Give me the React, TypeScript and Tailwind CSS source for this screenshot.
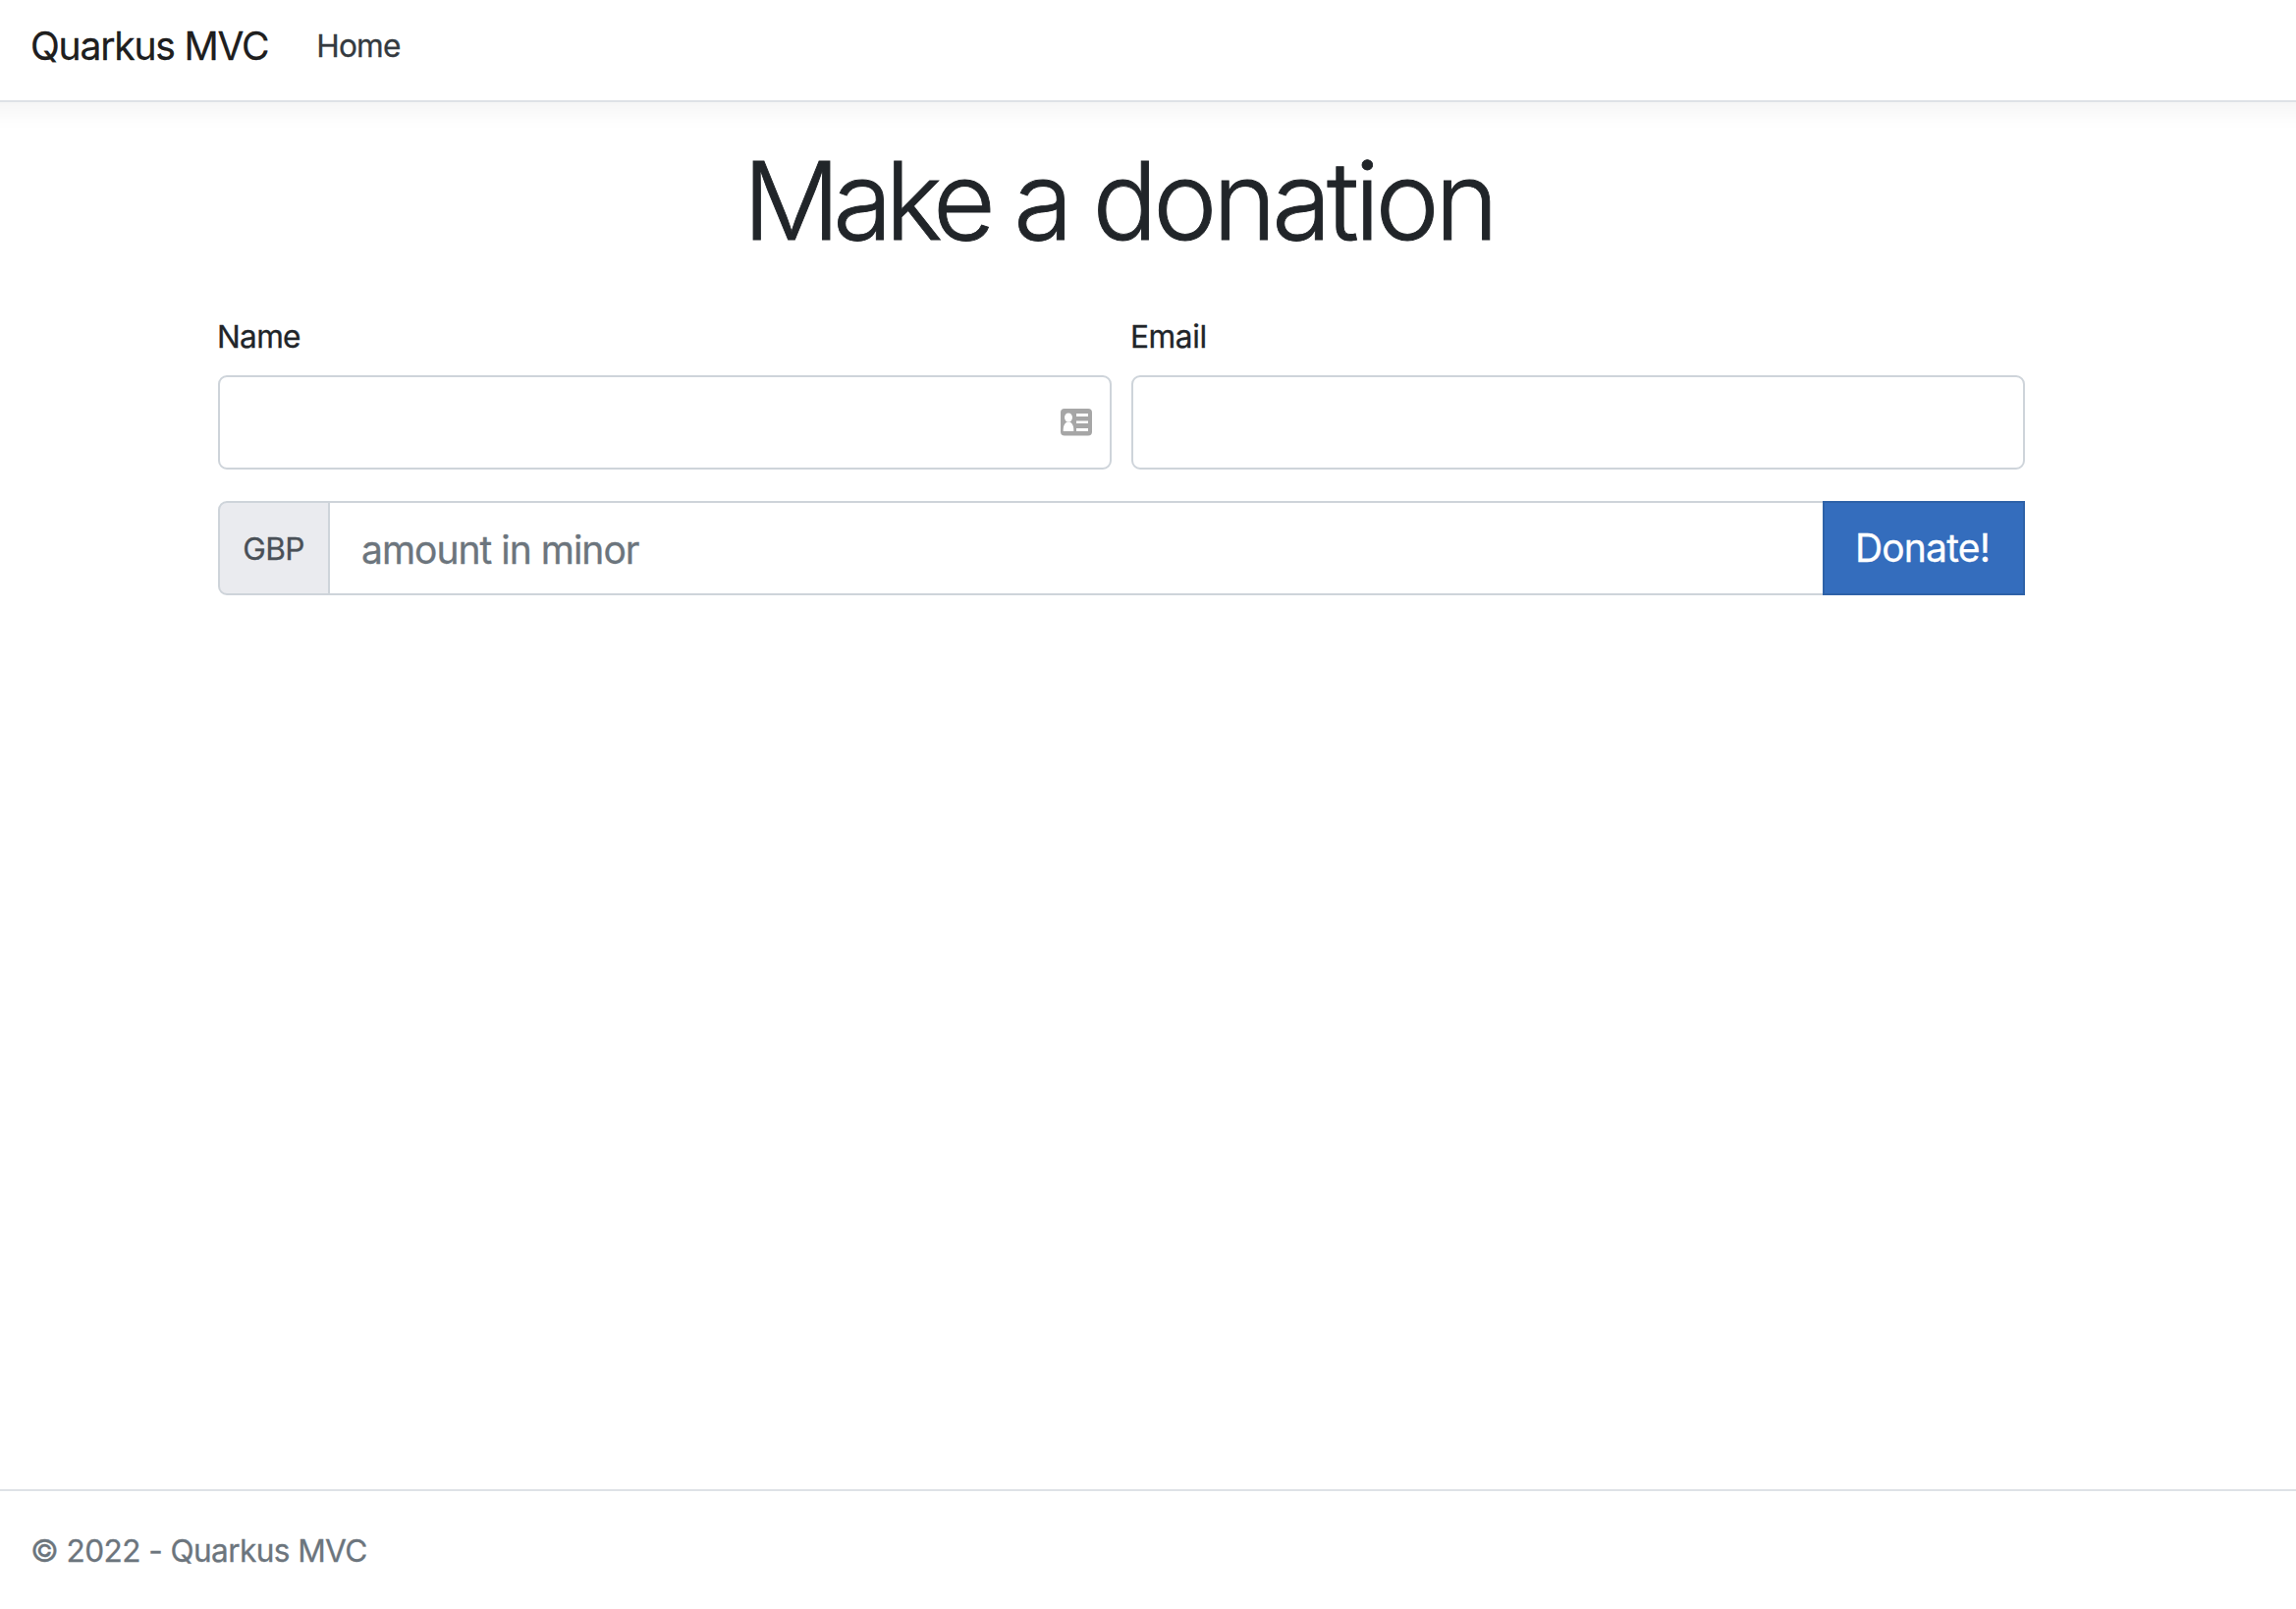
function ContactCardIcon() {
  return (
    <svg width="32" height="28" viewBox="0 0 32 28" fill="none" aria-hidden="true">
      <rect width="32" height="27.5" rx="4" fill="#a6a6a6" />
      <ellipse cx="8" cy="9" rx="4" ry="4.6" fill="#fff" />
      <path d="M2.700 23v-2c0-3.600 1.500-6 3.800-7.500h3c2.300 1.500 3.800 3.900 3.800 7.500v2z" fill="#fff" />
      <path d="M16 5h12v3H16zM16 12.500h12v2.500H16zM16 20h12v3H16z" fill="#fff" />
    </svg>
  );
}

export default function App() {
  return (
    <div className="flex h-[1638px] w-full flex-col overflow-hidden bg-white font-['Inter',sans-serif] text-[31.6px] leading-[48px] font-normal text-[#212529] [-webkit-text-stroke-width:0.3px]">
      <header className="-mx-8 h-[104px] shrink-0 border-b-2 border-[#dee2e6] px-8 shadow-[0_8px_24px_rgba(0,0,0,0.05)]">
        <nav className="flex h-[93px] items-center pl-[31px]">
          <a className="text-[39px] tracking-[-1.2px] text-black/90">Quarkus MVC</a>
          <a className="ml-[49px] tracking-[-0.8px] text-[#343a40]">Home</a>
        </nav>
      </header>

      <main className="ml-[222px] w-[1840px] flex-1 pt-[34px]">
        <h1 className="mr-[6px] mb-12 text-center text-[110px] leading-[132px] font-light tracking-[-6.1px] [-webkit-text-stroke-width:0.9px] [word-spacing:1px]">
          <span className="tracking-[-7.2px]">Make</span> a <span className="tracking-[-4.5px]">donation</span>
        </h1>
        <form>
          <div className="grid grid-cols-2 gap-5">
            <div>
              <label className="-ml-px mb-[15px] block pt-px tracking-[-0.7px]">Name</label>
              <div className="flex h-24 items-center justify-end rounded-[9px] border-2 border-[#ced4da] pr-[18px]">
                <ContactCardIcon />
              </div>
            </div>
            <div>
              <label className="-ml-px mb-[15px] block pt-px tracking-[-0.4px]">Email</label>
              <div className="h-24 rounded-[9px] border-2 border-[#ced4da]" />
            </div>
          </div>
          <div className="mt-8 flex h-24">
            <span className="flex w-[114px] items-center justify-center rounded-l-[9px] border-2 border-[#ced4da] bg-[#eaebef] pt-px pr-px tracking-[-0.7px] text-[#495057]">GBP</span>
            <div className="flex flex-1 items-center border-y-2 border-[#ced4da] pt-1 pl-8 text-[39px] tracking-[-1px] text-[#6c757d]">amount in minor</div>
            <button type="button" className="w-[206px] border-2 border-[#2e62a8] bg-[#346dbd] pr-[3px] text-[39px] tracking-[-0.8px] text-white">Donate!</button>
          </div>
        </form>
      </main>

      <footer className="h-[122px] shrink-0 border-t-2 border-[#dee2e6] pt-px pl-[31px] leading-[120px] tracking-[-0.6px] text-[#6c757d]">
        © 2022 - Quarkus MVC
      </footer>
    </div>
  );
}
